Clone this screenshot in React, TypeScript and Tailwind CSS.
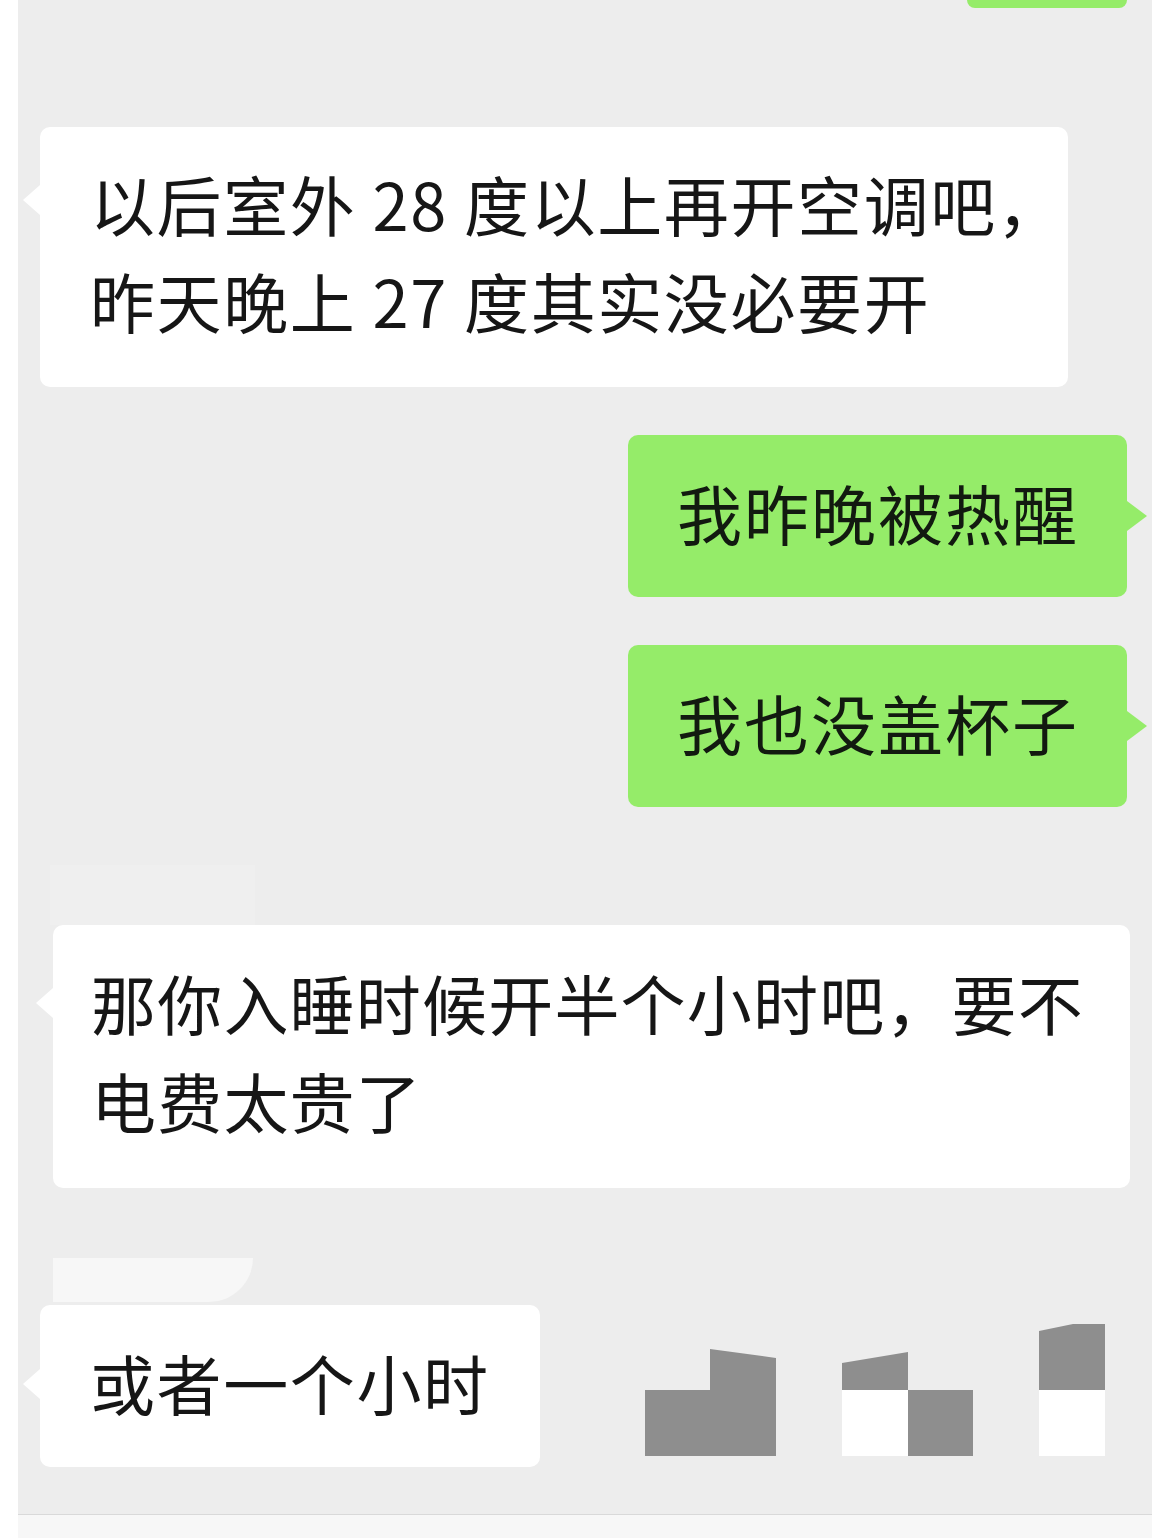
import React from "react";

function LeftTail({ top }: { top: number }) {
  return (
    <div
      className="absolute left-[-17px] w-0 h-0 border-y-[15px] border-y-transparent border-r-[17px] border-r-white"
      style={{ top }}
    />
  );
}

function RightTail() {
  return (
    <div className="absolute right-[-20px] top-[66px] w-0 h-0 border-y-[15px] border-y-transparent border-l-[20px] border-l-[#95ec69]" />
  );
}

function GreenBubble({ text }: { text: string }) {
  return (
    <div className="relative mt-[48px] self-end mr-[25px] w-[499px] h-[162px] bg-[#95ec69] rounded-[10px] flex items-center pl-[49px] pb-[8px]">
      <span className="text-[65px] leading-[97px] tracking-[2px] text-[#121a10]">{text}</span>
      <RightTail />
    </div>
  );
}

export default function App() {
  return (
    <div className="w-[1170px] h-[1538px] bg-white flex font-['Noto_Sans_CJK_SC',sans-serif] text-[#161616]">
      <div className="ml-[18px] w-[1134px] flex flex-col">
        <div className="h-[1514px] bg-[#ededed] flex flex-col">
          {/* top green stub */}
          <div className="self-end mr-[25px] w-[160px] h-[8px] bg-[#95ec69] rounded-b-[8px]" />

          {/* bubble 1 */}
          <div className="relative mt-[119px] ml-[22px] w-[1028px] h-[260px] bg-white rounded-[10px] pl-[50px] pt-[28px]">
            <p className="text-[65px] leading-[97px] tracking-[1.6px]">
              以后室外 28 度以上再开空调吧，
              <br />
              昨天晚上 27 度其实没必要开
            </p>
            <LeftTail top={58} />
          </div>

          <GreenBubble text="我昨晚被热醒" />
          <GreenBubble text="我也没盖杯子" />

          {/* faint ghost above bubble 2 */}
          <div className="mt-[58px] ml-[32px] w-[205px] h-[60px] bg-[#efefef]" />

          {/* bubble 2 */}
          <div className="relative ml-[35px] w-[1077px] h-[263px] bg-white rounded-[10px] pl-[38px] pt-[28px]">
            <p className="text-[65px] leading-[98px] tracking-[1.2px]">
              那你入睡时候开半个小时吧，要不
              <br />
              电费太贵了
            </p>
            <LeftTail top={63} />
          </div>

          {/* faint ghost shape */}
          <div className="mt-[70px] ml-[35px] w-[200px] h-[44px] bg-[#f7f7f7] rounded-br-[60px]" />

          {/* last row */}
          <div className="mt-[3px] flex items-start">
            <div className="relative ml-[22px] w-[500px] h-[162px] bg-white rounded-[10px] flex items-center pl-[50px] pb-[8px]">
              <span className="text-[65px] leading-[97px] tracking-[1.6px]">或者一个小时</span>
              <LeftTail top={64} />
            </div>
            <svg
              className="ml-[100px] mt-[15px]"
              width="470"
              height="137"
              viewBox="0 0 470 137"
            >
              <polygon points="5,70 70,70 70,29 136,38 136,136 5,136" fill="#8e8e8e" />
              <polygon points="202,43 268,32 268,70 202,70" fill="#8e8e8e" />
              <rect x="202" y="70" width="66" height="66" fill="#ffffff" />
              <rect x="268" y="70" width="65" height="66" fill="#8e8e8e" />
              <polygon points="399,11 433,4 465,4 465,70 399,70" fill="#8e8e8e" />
              <rect x="399" y="70" width="66" height="66" fill="#ffffff" />
            </svg>
          </div>
        </div>
        <div className="h-[24px] border-t border-[#d9d9d9] bg-[#f7f7f7]" />
      </div>
    </div>
  );
}
